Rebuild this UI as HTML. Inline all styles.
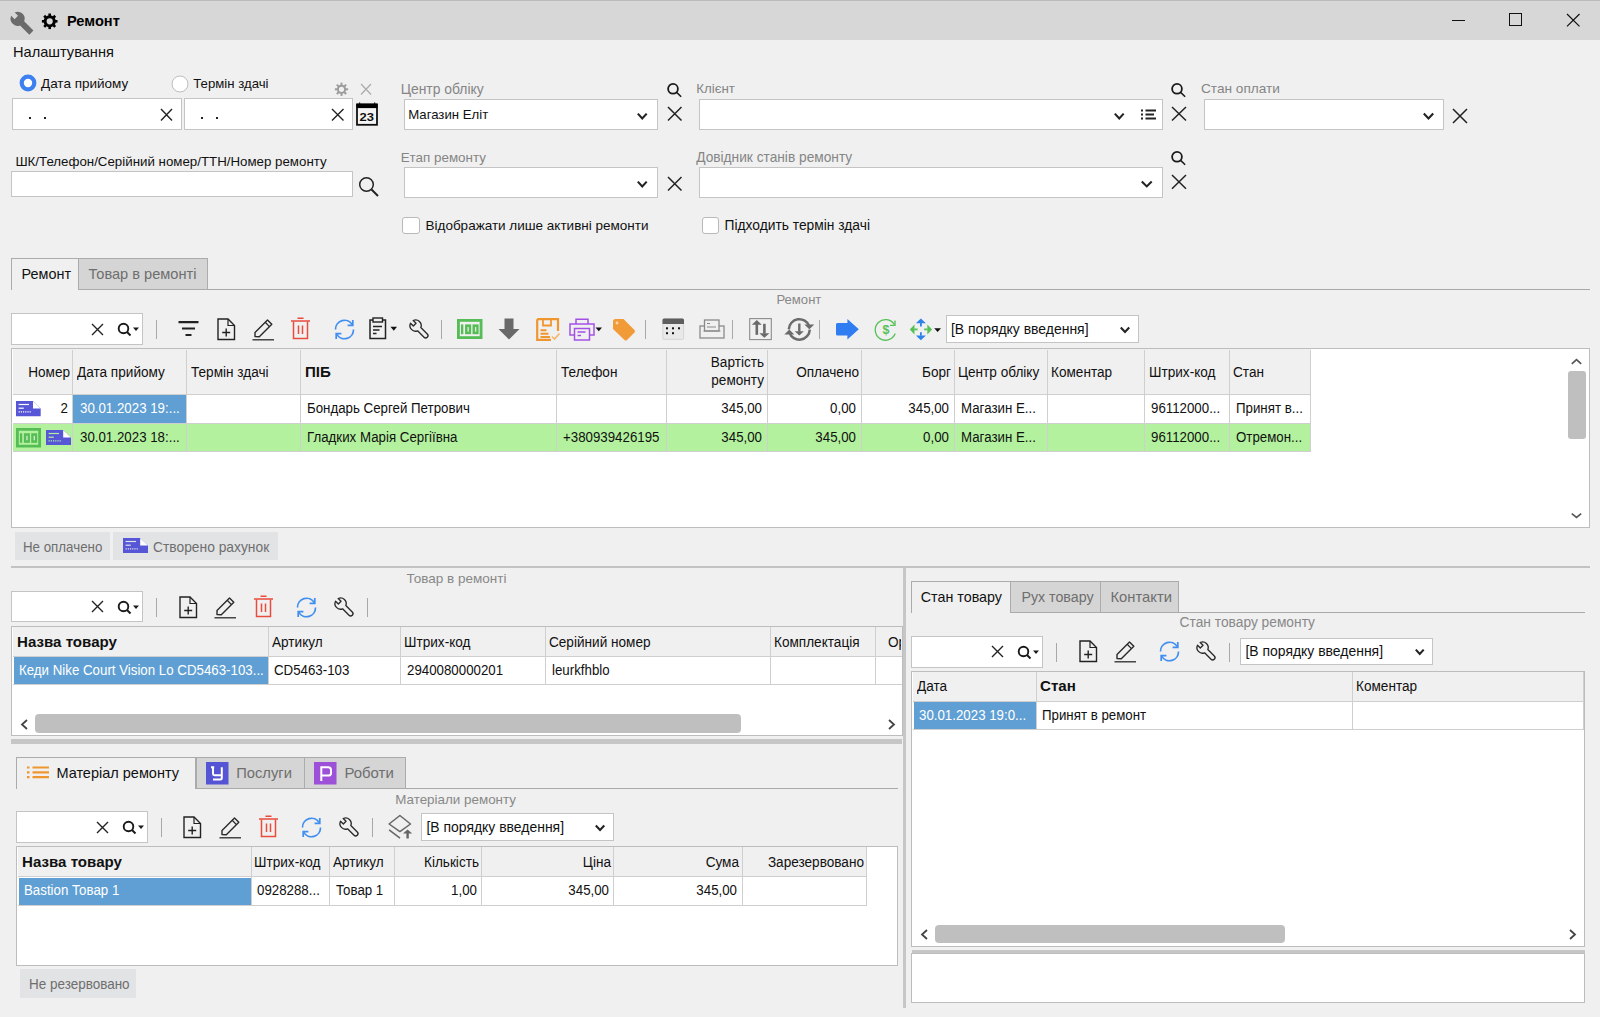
<!DOCTYPE html><html><head><meta charset="utf-8"><style>html,body{margin:0;padding:0;}body{width:1600px;height:1017px;position:relative;overflow:hidden;background:#f0f0f0;font-family:"Liberation Sans", sans-serif;}.t{position:absolute;white-space:nowrap;line-height:20px;}.r{position:absolute;}svg.r{overflow:visible;}</style></head><body>
<div class="r" style="left:0.00px;top:0.00px;width:1600.00px;height:40.00px;background:#d7d7d7;"></div>
<div class="r" style="left:0.00px;top:0.00px;width:1600.00px;height:1.00px;background:#bababa;"></div>
<svg class="r" style="left:10.00px;top:11.00px" width="26" height="26" viewBox="0 0 26 26"><g transform="translate(7.6 7.8) rotate(-45)"><path d="M-2.4 -6.6V-1.8H2.4V-6.6A7 7 0 0 1 2.9 6.4V19.5H-2.9V6.4A7 7 0 0 1 -2.4 -6.6Z" fill="#6b6b6b"/></g></svg>
<svg class="r" style="left:41.00px;top:13.00px" width="18" height="18" viewBox="0 0 18 18"><g transform="translate(8.7 8.3)"><circle r="4.6" fill="none" stroke="#000" stroke-width="3"/><rect x="-1.3" y="-7.8" width="2.6" height="3.6" fill="#000" transform="rotate(0)"/><rect x="-1.3" y="-7.8" width="2.6" height="3.6" fill="#000" transform="rotate(45)"/><rect x="-1.3" y="-7.8" width="2.6" height="3.6" fill="#000" transform="rotate(90)"/><rect x="-1.3" y="-7.8" width="2.6" height="3.6" fill="#000" transform="rotate(135)"/><rect x="-1.3" y="-7.8" width="2.6" height="3.6" fill="#000" transform="rotate(180)"/><rect x="-1.3" y="-7.8" width="2.6" height="3.6" fill="#000" transform="rotate(225)"/><rect x="-1.3" y="-7.8" width="2.6" height="3.6" fill="#000" transform="rotate(270)"/><rect x="-1.3" y="-7.8" width="2.6" height="3.6" fill="#000" transform="rotate(315)"/></g></svg>
<div class="t" style="top:11.24px;font-size:14.6px;color:#000;font-weight:bold;left:67.00px;">Ремонт</div>
<div class="r" style="left:1451.50px;top:20.00px;width:13.00px;height:1.20px;background:#111;"></div>
<div class="r" style="left:1509.00px;top:13.00px;width:13.00px;height:13.00px;border:1px solid #111;box-sizing:border-box;border-width:1.3px;"></div>
<svg class="r" style="left:1565.50px;top:12.80px" width="14.5" height="14.399999999999999" viewBox="0 0 14.5 14.399999999999999"><path d="M1 1L13.5 13.399999999999999M13.5 1L1 13.399999999999999" stroke="#111" stroke-width="1.2" fill="none"/></svg>
<div class="t" style="top:42.44px;font-size:14.6px;color:#111;left:13.00px;">Налаштування</div>
<svg class="r" style="left:18.50px;top:74.30px" width="18" height="18" viewBox="0 0 18 18"><circle cx="9" cy="9" r="6.3" fill="#fff" stroke="#3d80f0" stroke-width="4.2"/></svg>
<div class="t" style="top:74.32px;font-size:13.5px;color:#111;left:41.00px;">Дата прийому</div>
<svg class="r" style="left:170.50px;top:74.50px" width="18" height="18" viewBox="0 0 18 18"><circle cx="9" cy="9" r="8" fill="#fff" stroke="#bdbdbd" stroke-width="1"/></svg>
<div class="t" style="top:74.43px;font-size:13.2px;color:#111;left:193.30px;">Термін здачі</div>
<svg class="r" style="left:334.00px;top:82.00px" width="15" height="15" viewBox="0 0 15 15"><g transform="translate(7.5 7.3)"><circle r="3.6" fill="none" stroke="#9c9c9c" stroke-width="2"/><rect x="-1" y="-6.6" width="2" height="2.8" fill="#9c9c9c" transform="rotate(0)"/><rect x="-1" y="-6.6" width="2" height="2.8" fill="#9c9c9c" transform="rotate(45)"/><rect x="-1" y="-6.6" width="2" height="2.8" fill="#9c9c9c" transform="rotate(90)"/><rect x="-1" y="-6.6" width="2" height="2.8" fill="#9c9c9c" transform="rotate(135)"/><rect x="-1" y="-6.6" width="2" height="2.8" fill="#9c9c9c" transform="rotate(180)"/><rect x="-1" y="-6.6" width="2" height="2.8" fill="#9c9c9c" transform="rotate(225)"/><rect x="-1" y="-6.6" width="2" height="2.8" fill="#9c9c9c" transform="rotate(270)"/><rect x="-1" y="-6.6" width="2" height="2.8" fill="#9c9c9c" transform="rotate(315)"/></g></svg>
<svg class="r" style="left:360.00px;top:83.00px" width="12" height="12.5" viewBox="0 0 12 12.5"><path d="M1 1L11 11.5M11 1L1 11.5" stroke="#aaaaaa" stroke-width="1.2" fill="none"/></svg>
<div class="r" style="left:12.00px;top:98.00px;width:170.00px;height:32.00px;background:#fff;border:1px solid #c4c4c4;box-sizing:border-box;"></div>
<div class="r" style="left:28.50px;top:117.00px;width:2.00px;height:2.00px;background:#222;"></div>
<div class="r" style="left:43.50px;top:117.00px;width:2.00px;height:2.00px;background:#222;"></div>
<svg class="r" style="left:160.00px;top:108.00px" width="13" height="13.5" viewBox="0 0 13 13.5"><path d="M1 1L12 12.5M12 1L1 12.5" stroke="#222" stroke-width="1.4" fill="none"/></svg>
<div class="r" style="left:184.00px;top:98.00px;width:169.00px;height:32.00px;background:#fff;border:1px solid #c4c4c4;box-sizing:border-box;"></div>
<div class="r" style="left:200.50px;top:117.00px;width:2.00px;height:2.00px;background:#222;"></div>
<div class="r" style="left:215.50px;top:117.00px;width:2.00px;height:2.00px;background:#222;"></div>
<svg class="r" style="left:330.50px;top:108.00px" width="13.5" height="13.5" viewBox="0 0 13.5 13.5"><path d="M1 1L12.5 12.5M12.5 1L1 12.5" stroke="#222" stroke-width="1.4" fill="none"/></svg>
<svg class="r" style="left:356.00px;top:101.50px" width="22" height="24" viewBox="0 0 22 24"><rect x="1" y="2.5" width="20" height="20.3" stroke="#111" stroke-width="1.8" fill="#f4f4f4"/><rect x="0.5" y="1.6" width="21" height="4.5" fill="#000"/><path d="M3.6 0.5V2M18.6 0.5V2" stroke="#111" stroke-width="1.2"/><text x="3.6" y="19" textLength="14.5" lengthAdjust="spacingAndGlyphs" font-family="Liberation Sans" font-weight="bold" font-size="11" fill="#111">23</text></svg>
<div class="t" style="top:152.09px;font-size:13.3px;color:#111;left:15.40px;">ШК/Телефон/Серійний номер/ТТН/Номер ремонту</div>
<div class="r" style="left:11.00px;top:171.00px;width:342.00px;height:26.00px;background:#fff;border:1px solid #c4c4c4;box-sizing:border-box;"></div>
<svg class="r" style="left:358.00px;top:176.00px" width="22" height="22" viewBox="0 0 22 22"><circle cx="8.5" cy="8.5" r="6.8" stroke="#222" stroke-width="1.5" fill="none"/><path d="M13.5 13.5L20 20" stroke="#222" stroke-width="2"/></svg>
<div class="t" style="top:78.88px;font-size:13.9px;color:#858585;left:400.70px;">Центр обліку</div>
<div class="r" style="left:404.00px;top:99.00px;width:254.00px;height:31.00px;background:#fff;border:1px solid #c4c4c4;box-sizing:border-box;"></div>
<div class="t" style="top:105.13px;font-size:13.2px;color:#111;left:408.20px;">Магазин Еліт</div>
<svg class="r" style="left:636.00px;top:111.50px" width="12.5" height="8.0" viewBox="0 0 12.5 8.0"><path d="M1.8 1.6L6.25 6.4L10.7 1.6" stroke="#222" stroke-width="2.1" fill="none"/></svg>
<svg class="r" style="left:666.50px;top:82.50px" width="16" height="15" viewBox="0 0 16 15"><circle cx="6" cy="5.8" r="4.9" stroke="#1a1a1a" stroke-width="1.8" fill="none"/><path d="M9.6 9.4L14.2 13.8" stroke="#1a1a1a" stroke-width="1.5"/></svg>
<svg class="r" style="left:666.50px;top:106.00px" width="15.5" height="15.5" viewBox="0 0 15.5 15.5"><path d="M1 1L14.5 14.5M14.5 1L1 14.5" stroke="#222" stroke-width="1.5" fill="none"/></svg>
<div class="t" style="top:79.09px;font-size:13.3px;color:#858585;left:696.20px;">Клієнт</div>
<div class="r" style="left:699.00px;top:99.00px;width:464.00px;height:31.00px;background:#fff;border:1px solid #c4c4c4;box-sizing:border-box;"></div>
<svg class="r" style="left:1113.00px;top:111.50px" width="12.5" height="8.0" viewBox="0 0 12.5 8.0"><path d="M1.8 1.6L6.25 6.4L10.7 1.6" stroke="#222" stroke-width="2.1" fill="none"/></svg>
<svg class="r" style="left:1140.00px;top:109.00px" width="17" height="12" viewBox="0 0 17 12"><path d="M1 1.5h2M1 5.5h2M1 9.5h2" stroke="#222" stroke-width="2"/><path d="M5.5 1.5H16M5.5 5.5H14M5.5 9.5H16" stroke="#222" stroke-width="1.8"/></svg>
<svg class="r" style="left:1171.00px;top:82.50px" width="16" height="15" viewBox="0 0 16 15"><circle cx="6" cy="5.8" r="4.9" stroke="#1a1a1a" stroke-width="1.8" fill="none"/><path d="M9.6 9.4L14.2 13.8" stroke="#1a1a1a" stroke-width="1.5"/></svg>
<svg class="r" style="left:1171.00px;top:106.00px" width="16" height="15.5" viewBox="0 0 16 15.5"><path d="M1 1L15 14.5M15 1L1 14.5" stroke="#222" stroke-width="1.5" fill="none"/></svg>
<div class="t" style="top:79.02px;font-size:13.65px;color:#858585;left:1201.00px;">Стан оплати</div>
<div class="r" style="left:1204.00px;top:99.00px;width:240.00px;height:31.00px;background:#fff;border:1px solid #c4c4c4;box-sizing:border-box;"></div>
<svg class="r" style="left:1421.50px;top:111.50px" width="13.0" height="8.0" viewBox="0 0 13.0 8.0"><path d="M1.8 1.6L6.5 6.4L11.2 1.6" stroke="#222" stroke-width="2.1" fill="none"/></svg>
<svg class="r" style="left:1452.00px;top:107.50px" width="16" height="16.0" viewBox="0 0 16 16.0"><path d="M1 1L15 15.0M15 1L1 15.0" stroke="#222" stroke-width="1.5" fill="none"/></svg>
<div class="t" style="top:147.66px;font-size:13.4px;color:#858585;left:400.70px;">Етап ремонту</div>
<div class="r" style="left:404.00px;top:167.00px;width:254.00px;height:31.00px;background:#fff;border:1px solid #c4c4c4;box-sizing:border-box;"></div>
<svg class="r" style="left:636.00px;top:179.50px" width="12.5" height="8.0" viewBox="0 0 12.5 8.0"><path d="M1.8 1.6L6.25 6.4L10.7 1.6" stroke="#222" stroke-width="2.1" fill="none"/></svg>
<svg class="r" style="left:666.50px;top:175.50px" width="15.5" height="15.5" viewBox="0 0 15.5 15.5"><path d="M1 1L14.5 14.5M14.5 1L1 14.5" stroke="#222" stroke-width="1.5" fill="none"/></svg>
<div class="t" style="top:147.55px;font-size:13.72px;color:#858585;left:696.20px;">Довідник станів ремонту</div>
<div class="r" style="left:699.00px;top:167.00px;width:464.00px;height:31.00px;background:#fff;border:1px solid #c4c4c4;box-sizing:border-box;"></div>
<svg class="r" style="left:1140.00px;top:179.50px" width="13.5" height="8.0" viewBox="0 0 13.5 8.0"><path d="M1.8 1.6L6.75 6.4L11.7 1.6" stroke="#222" stroke-width="2.1" fill="none"/></svg>
<svg class="r" style="left:1171.00px;top:151.00px" width="16" height="15" viewBox="0 0 16 15"><circle cx="6" cy="5.8" r="4.9" stroke="#1a1a1a" stroke-width="1.8" fill="none"/><path d="M9.6 9.4L14.2 13.8" stroke="#1a1a1a" stroke-width="1.5"/></svg>
<svg class="r" style="left:1171.00px;top:174.00px" width="16" height="15.75" viewBox="0 0 16 15.75"><path d="M1 1L15 14.75M15 1L1 14.75" stroke="#222" stroke-width="1.5" fill="none"/></svg>
<div class="r" style="left:402.00px;top:217.00px;width:18.00px;height:17.00px;background:#fff;border:1px solid #b9b9b9;box-sizing:border-box;border-radius:3px;"></div>
<div class="t" style="top:216.32px;font-size:13.5px;color:#111;left:425.50px;">Відображати лише активні ремонти</div>
<div class="r" style="left:702.00px;top:217.00px;width:17.00px;height:17.00px;background:#fff;border:1px solid #b9b9b9;box-sizing:border-box;border-radius:3px;"></div>
<div class="t" style="top:216.22px;font-size:13.8px;color:#111;left:724.50px;">Підходить термін здачі</div>
<div class="r" style="left:11.00px;top:258.00px;width:68.00px;height:32.00px;background:#f0f0f0;border:1px solid #ababab;border-bottom:none;box-sizing:border-box;"></div>
<div class="t" style="top:264.01px;font-size:14.4px;color:#111;left:21.60px;">Ремонт</div>
<div class="r" style="left:78.00px;top:258.00px;width:130.00px;height:32.00px;background:#d5d5d5;border:1px solid #ababab;box-sizing:border-box;"></div>
<div class="t" style="top:263.94px;font-size:14.6px;color:#6e6e6e;left:88.50px;">Товар в ремонті</div>
<div class="r" style="left:207.50px;top:288.80px;width:1382.50px;height:1.10px;background:#a9a9a9;"></div>
<div class="t" style="top:290.31px;font-size:13.1px;color:#888;left:598.90px;width:400px;text-align:center;">Ремонт</div>
<div class="r" style="left:11.00px;top:313.00px;width:132.00px;height:32.00px;background:#fff;border:1px solid #c4c4c4;box-sizing:border-box;"></div>
<svg class="r" style="left:91.10px;top:322.62px" width="13.0" height="13.0" viewBox="0 0 13.0 13.0"><path d="M1 1L12.0 12.0M12.0 1L1 12.0" stroke="#222" stroke-width="1.4" fill="none"/></svg>
<svg class="r" style="left:117.10px;top:322.12px" width="23" height="16" viewBox="0 0 23 16"><circle cx="6.5" cy="6.5" r="4.8" stroke="#1a1a1a" stroke-width="1.9" fill="none"/><path d="M10 10L13.5 13.5" stroke="#1a1a1a" stroke-width="2"/><path d="M16 5.5h6l-3 3.5z" fill="#1a1a1a"/></svg>
<div class="r" style="left:156.00px;top:320.00px;width:1.20px;height:18.50px;background:#a8a8a8;"></div>
<svg class="r" style="left:177.50px;top:321.00px" width="21" height="16" viewBox="0 0 21 16"><path d="M0.5 1.2H20.5M4 7.5H17M7.5 14H13.5" stroke="#222" stroke-width="2.2"/></svg>
<svg class="r" style="left:216.50px;top:317.50px" width="19" height="23" viewBox="0 0 19 23"><path d="M1 1H11L17.5 7.5V21.5H1Z" stroke="#222" stroke-width="1.4" fill="none" stroke-linejoin="miter"/><path d="M11 1V7.5H17.5" stroke="#222" stroke-width="1.2" fill="none"/><path d="M9.2 10.5V18.5M5.2 14.5H13.2" stroke="#222" stroke-width="1.4"/></svg>
<svg class="r" style="left:251.50px;top:317.50px" width="23" height="23" viewBox="0 0 23 23"><path d="M3 18.5V14.5L15.5 2L19.8 6.3L7.3 18.8Z" stroke="#2a2a2a" stroke-width="1.4" fill="none" stroke-linejoin="round"/><path d="M13.2 4.3L17.5 8.6" stroke="#2a2a2a" stroke-width="1.3"/><path d="M0.5 21.8H22" stroke="#2a2a2a" stroke-width="1.3"/></svg>
<svg class="r" style="left:289.50px;top:317.20px" width="21" height="23" viewBox="0 0 21 23"><path d="M1 4H20M7.5 1.2H13.5" stroke="#e94b3c" stroke-width="1.5"/><path d="M3.5 4.5V21.5H17.5V4.5" stroke="#e94b3c" stroke-width="1.5" fill="none"/><path d="M8.5 8.5V17M12.5 8.5V17" stroke="#e94b3c" stroke-width="1.5"/></svg>
<svg class="r" style="left:333.50px;top:318.50px" width="21" height="21" viewBox="0 0 21 21"><path d="M1.5 10.5A9 9 0 0 1 18.2 5.6" stroke="#3f8ef0" stroke-width="1.7" fill="none"/><path d="M19.5 10.5A9 9 0 0 1 2.8 15.4" stroke="#3f8ef0" stroke-width="1.7" fill="none"/><path d="M18.8 1V6.3H13.6" stroke="#3f8ef0" stroke-width="1.7" fill="none"/><path d="M2.2 20V14.7H7.4" stroke="#3f8ef0" stroke-width="1.7" fill="none"/></svg>
<svg class="r" style="left:368.00px;top:317.00px" width="30" height="23" viewBox="0 0 30 23"><path d="M5 3H2V21.5H17.5V3H14.5" stroke="#222" stroke-width="1.5" fill="none"/><rect x="5" y="1" width="9.5" height="4" stroke="#222" stroke-width="1.4" fill="none"/><path d="M5 9.5H14M5 13H11.5M5 16.5H8.5" stroke="#222" stroke-width="1.4"/><path d="M22.5 9.8h6.5l-3.2 4z" fill="#111"/></svg>
<svg class="r" style="left:408.50px;top:318.50px" width="21" height="21" viewBox="0 0 21 21"><g transform="translate(6.6 6.6) rotate(-45)"><path d="M-1.9 -5.3V-1.3H1.9V-5.3A5.6 5.6 0 0 1 2.3 5.1V14.2A2.3 2.3 0 0 1 -2.3 14.2V5.1A5.6 5.6 0 0 1 -1.9 -5.3Z" stroke="#2a2a2a" stroke-width="1.35" fill="none" stroke-linejoin="round"/></g></svg>
<div class="r" style="left:441.20px;top:320.00px;width:1.20px;height:18.50px;background:#a8a8a8;"></div>
<svg class="r" style="left:457.00px;top:319.00px" width="25.5" height="20" viewBox="0 0 25.5 20"><g transform="scale(1.020 1.000)"><rect x="1.4" y="1.4" width="22.2" height="17.2" stroke="#56bd56" stroke-width="2.8" fill="none"/><rect x="3.9" y="5.4" width="2.3" height="9.8" fill="#56bd56"/><rect x="7.9" y="5.4" width="6" height="9.8" fill="#56bd56"/><rect x="10.3" y="8" width="1.3" height="4.6" fill="#d8f0d8"/><rect x="15.2" y="5.4" width="6" height="9.8" fill="#56bd56"/><rect x="17.6" y="8" width="1.3" height="4.6" fill="#d8f0d8"/></g></svg>
<svg class="r" style="left:497.50px;top:318.00px" width="22" height="22" viewBox="0 0 22 22"><path d="M6.5 0.5H15.5V11H21.5L11 21.5L0.5 11H6.5Z" fill="#696969"/></svg>
<svg class="r" style="left:536.00px;top:318.00px" width="25" height="23" viewBox="0 0 25 23"><path d="M1.2 1.2H22V13M15 21.8H1.2V1.2" stroke="#f0962f" stroke-width="2.2" fill="none"/><path d="M7 1.5V7.5H15V1.5" stroke="#f0962f" stroke-width="1.8" fill="none"/><path d="M4.5 12.2H10.5M4.5 15.8H12.5M4.5 19H14" stroke="#f0962f" stroke-width="1.9"/><path d="M16 18.5L18.5 21L23.5 15.5" stroke="#f6b56a" stroke-width="1.6" fill="none"/></svg>
<svg class="r" style="left:569.00px;top:318.00px" width="34" height="23" viewBox="0 0 34 23"><path d="M7 6V1.2H19V6" stroke="#a450e6" stroke-width="1.5" fill="none"/><path d="M5.5 17H1V6H25V17H20.5" stroke="#a450e6" stroke-width="1.5" fill="none"/><rect x="5.5" y="10.5" width="15" height="11.5" stroke="#a450e6" stroke-width="1.5" fill="#f0f0f0"/><path d="M8.5 14H16.5M8.5 17.5H12" stroke="#a450e6" stroke-width="1.4"/><path d="M26.5 9.5h6.5l-3.2 3.8z" fill="#111"/></svg>
<svg class="r" style="left:612.00px;top:317.50px" width="24" height="23" viewBox="0 0 24 23"><path d="M1 3.5Q1 1 3.5 1H11.5L22.5 12Q23.5 13.2 22.5 14.5L15 22Q13.8 23 12.5 22L1 11Z" fill="#f19b38"/><circle cx="5" cy="5" r="1.4" fill="#fbd9ae"/></svg>
<div class="r" style="left:644.50px;top:320.00px;width:1.20px;height:18.50px;background:#a8a8a8;"></div>
<svg class="r" style="left:662.00px;top:318.00px" width="22" height="22" viewBox="0 0 22 22"><rect x="0.8" y="0.8" width="20.8" height="20.6" rx="1.2" fill="#e9e9e9" stroke="#cfcfcf" stroke-width="0.8"/><path d="M0.5 2A1.5 1.5 0 0 1 2 0.5H20.5A1.5 1.5 0 0 1 22 2V6H0.5Z" fill="#5e5e5e"/><rect x="4" y="9.3" width="2" height="2" fill="#111"/><rect x="10" y="9.3" width="2" height="2" fill="#111"/><rect x="16" y="9.3" width="2" height="2" fill="#111"/><rect x="4" y="14.2" width="2" height="2" fill="#111"/><rect x="10" y="14.2" width="2" height="2" fill="#111"/></svg>
<svg class="r" style="left:698.50px;top:319.00px" width="26" height="20" viewBox="0 0 26 20"><rect x="1" y="7" width="24" height="12" stroke="#8a8a8a" stroke-width="1.3" fill="none"/><rect x="5.5" y="1" width="14.5" height="11" stroke="#8a8a8a" stroke-width="1.3" fill="#f0f0f0"/><path d="M8 4.5H11M8 8H17M4.5 12H21.5" stroke="#8a8a8a" stroke-width="1.2"/></svg>
<div class="r" style="left:731.60px;top:320.00px;width:1.20px;height:18.50px;background:#a8a8a8;"></div>
<svg class="r" style="left:748.50px;top:318.00px" width="23" height="22" viewBox="0 0 23 22"><rect x="0.7" y="0.6" width="21.6" height="21" stroke="#8c8c8c" stroke-width="1.1" fill="none"/><path d="M7.8 6V16.8" stroke="#6a6a6a" stroke-width="2.6"/><path d="M2.8 6.7L7.8 2.1L12.8 6.7Z" fill="#6a6a6a"/><path d="M15.4 5.8V15.6" stroke="#6a6a6a" stroke-width="2.6"/><path d="M10.4 15.2L15.4 19.8L20.4 15.2Z" fill="#6a6a6a"/></svg>
<svg class="r" style="left:783.50px;top:316.50px" width="31" height="25" viewBox="0 0 31 25"><path d="M4.8 12.4A10.5 10.5 0 0 1 25.2 9.2" stroke="#6b6b6b" stroke-width="2.5" fill="none"/><path d="M25.8 12.6A10.5 10.5 0 0 1 5.4 15.6" stroke="#6b6b6b" stroke-width="2.5" fill="none"/><path d="M20.3 7.6H30.3L25.3 12.3Z" fill="#6b6b6b"/><path d="M0.3 17.6H10.3L5.3 12.4Z" fill="#6b6b6b"/><path d="M15.3 6.5V14.8" stroke="#6b6b6b" stroke-width="2.4"/><path d="M10.7 14.3H19.9L15.3 18.6Z" fill="#6b6b6b"/></svg>
<div class="r" style="left:819.00px;top:320.00px;width:1.20px;height:18.50px;background:#a8a8a8;"></div>
<svg class="r" style="left:836.00px;top:319.00px" width="23" height="21" viewBox="0 0 23 21"><path d="M1.5 4H11.4V0L22.8 10.3L11.4 20.5V16.6H1.5Q0 16.6 0 15V5.5Q0 4 1.5 4Z" fill="#2f7df0"/></svg>
<svg class="r" style="left:874.00px;top:318.50px" width="24" height="22" viewBox="0 0 24 22"><path d="M21.2 14.5A10.3 10.3 0 1 1 20.3 5.5" stroke="#56c156" stroke-width="1.35" fill="none"/><path d="M21 1.5V6.3H16" stroke="#56c156" stroke-width="1.35" fill="none"/><text x="12" y="14.6" text-anchor="middle" font-family="Liberation Sans" font-weight="bold" font-size="12.5" fill="#56c156">$</text></svg>
<svg class="r" style="left:909.00px;top:317.50px" width="33" height="23" viewBox="0 0 33 23"><path d="M6.9 5.3L11.9 0.6L16.9 5.3Z" fill="#2f80ea"/><path d="M11.9 5V8.6" stroke="#2f80ea" stroke-width="1.8"/><path d="M6.9 17.5L11.9 22.2L16.9 17.5Z" fill="#2f80ea"/><path d="M11.9 14.3V17.8" stroke="#2f80ea" stroke-width="1.8"/><path d="M5.5 6.4L0.8 11.4L5.5 16.4Z" fill="#56c156"/><path d="M5.2 11.4H8.6" stroke="#56c156" stroke-width="1.8"/><path d="M18.3 6.4L23.1 11.4L18.3 16.4Z" fill="#56c156"/><path d="M15.2 11.4H18.6" stroke="#56c156" stroke-width="1.8"/><path d="M25.2 10.3h6.8l-3.4 3.6z" fill="#111"/></svg>
<div class="r" style="left:946.00px;top:315.00px;width:193.00px;height:28.00px;background:#fff;border:1px solid #c4c4c4;box-sizing:border-box;"></div>
<div class="t" style="top:319.17px;font-size:13.95px;color:#111;left:951.00px;">[В порядку введення]</div>
<svg class="r" style="left:1119.00px;top:325.50px" width="12" height="7.5" viewBox="0 0 12 7.5"><path d="M1.8 1.6L6.0 5.9L10.2 1.6" stroke="#222" stroke-width="2.1" fill="none"/></svg>
<div class="r" style="left:11.00px;top:348.00px;width:1579.00px;height:180.00px;background:#fff;border:1px solid #bdbdbd;box-sizing:border-box;"></div>
<div class="r" style="left:12.50px;top:349.30px;width:1298.00px;height:45.00px;background:#f0f0f0;"></div>
<div class="r" style="left:186.40px;top:394.30px;width:114.20px;height:28.70px;background:#fff;"></div>
<div class="r" style="left:72.60px;top:394.30px;width:113.80px;height:28.70px;background:#5f9fd3;"></div>
<div class="r" style="left:12.50px;top:423.00px;width:1298.00px;height:28.50px;background:#b3f19e;"></div>
<div class="r" style="left:12.50px;top:394.00px;width:1298.00px;height:1.20px;background:#cfcfcf;"></div>
<div class="r" style="left:12.50px;top:422.60px;width:1298.00px;height:1.00px;background:#cfcfcf;"></div>
<div class="r" style="left:12.50px;top:451.00px;width:1298.00px;height:1.20px;background:#cfcfcf;"></div>
<div class="r" style="left:72.10px;top:350.30px;width:1.20px;height:101.70px;background:#cfcfcf;"></div>
<div class="r" style="left:185.90px;top:350.30px;width:1.20px;height:101.70px;background:#cfcfcf;"></div>
<div class="r" style="left:300.10px;top:350.30px;width:1.20px;height:101.70px;background:#cfcfcf;"></div>
<div class="r" style="left:555.80px;top:350.30px;width:1.20px;height:101.70px;background:#cfcfcf;"></div>
<div class="r" style="left:665.50px;top:350.30px;width:1.20px;height:101.70px;background:#cfcfcf;"></div>
<div class="r" style="left:766.50px;top:350.30px;width:1.20px;height:101.70px;background:#cfcfcf;"></div>
<div class="r" style="left:861.00px;top:350.30px;width:1.20px;height:101.70px;background:#cfcfcf;"></div>
<div class="r" style="left:953.50px;top:350.30px;width:1.20px;height:101.70px;background:#cfcfcf;"></div>
<div class="r" style="left:1046.90px;top:350.30px;width:1.20px;height:101.70px;background:#cfcfcf;"></div>
<div class="r" style="left:1143.80px;top:350.30px;width:1.20px;height:101.70px;background:#cfcfcf;"></div>
<div class="r" style="left:1228.80px;top:350.30px;width:1.20px;height:101.70px;background:#cfcfcf;"></div>
<div class="r" style="left:1310.00px;top:350.30px;width:1.20px;height:101.70px;background:#cfcfcf;"></div>
<div class="t" style="top:362.26px;font-size:15.4px;color:#111;left:-330.00px;width:400px;text-align:right;transform:scaleX(0.8831);transform-origin:right center;">Номер</div>
<div class="t" style="top:362.26px;font-size:15.4px;color:#111;left:77.20px;transform:scaleX(0.8831);transform-origin:left center;">Дата прийому</div>
<div class="t" style="top:362.26px;font-size:15.4px;color:#111;left:190.60px;transform:scaleX(0.8831);transform-origin:left center;">Термін здачі</div>
<div class="t" style="top:362.26px;font-size:15.4px;color:#111;font-weight:bold;left:305.00px;transform:scaleX(0.9805);transform-origin:left center;">ПІБ</div>
<div class="t" style="top:362.26px;font-size:15.4px;color:#111;left:560.50px;transform:scaleX(0.8831);transform-origin:left center;">Телефон</div>
<div class="t" style="top:352.46px;font-size:15.4px;color:#111;left:364.40px;width:400px;text-align:right;transform:scaleX(0.8831);transform-origin:right center;">Вартість</div>
<div class="t" style="top:370.16px;font-size:15.4px;color:#111;left:364.40px;width:400px;text-align:right;transform:scaleX(0.8831);transform-origin:right center;">ремонту</div>
<div class="t" style="top:362.26px;font-size:15.4px;color:#111;left:459.00px;width:400px;text-align:right;transform:scaleX(0.8831);transform-origin:right center;">Оплачено</div>
<div class="t" style="top:362.26px;font-size:15.4px;color:#111;left:550.80px;width:400px;text-align:right;transform:scaleX(0.8831);transform-origin:right center;">Борг</div>
<div class="t" style="top:362.26px;font-size:15.4px;color:#111;left:957.80px;transform:scaleX(0.8831);transform-origin:left center;">Центр обліку</div>
<div class="t" style="top:362.26px;font-size:15.4px;color:#111;left:1051.00px;transform:scaleX(0.8831);transform-origin:left center;">Коментар</div>
<div class="t" style="top:362.26px;font-size:15.4px;color:#111;left:1148.50px;transform:scaleX(0.8831);transform-origin:left center;">Штрих-код</div>
<div class="t" style="top:362.26px;font-size:15.4px;color:#111;left:1233.00px;transform:scaleX(0.8831);transform-origin:left center;">Стан</div>
<svg class="r" style="left:16.20px;top:401.00px" width="24.7" height="15.2" viewBox="0 0 24.7 15.2"><path d="M0 0H17.0L24.7 7.6V15.2H0Z" fill="#5656d6"/><path d="M17.0 0L24.7 7.6H17.0Z" fill="#fff"/><path d="M2.6 3.5H13" stroke="#fff" stroke-width="1.2"/><path d="M2.6 7.2H7.8" stroke="#fff" stroke-width="1.2"/><path d="M2.6 10.9H15" stroke="#fff" stroke-width="1.2" stroke-dasharray="1.2 1"/></svg>
<div class="t" style="top:398.26px;font-size:15.4px;color:#111;left:-332.40px;width:400px;text-align:right;transform:scaleX(0.8636);transform-origin:right center;">2</div>
<div class="t" style="top:398.26px;font-size:15.4px;color:#fff;left:79.60px;transform:scaleX(0.8636);transform-origin:left center;">30.01.2023 19:...</div>
<div class="t" style="top:398.26px;font-size:15.4px;color:#111;left:307.30px;transform:scaleX(0.8636);transform-origin:left center;">Бондарь Сергей Петрович</div>
<div class="t" style="top:398.26px;font-size:15.4px;color:#111;left:361.80px;width:400px;text-align:right;transform:scaleX(0.8636);transform-origin:right center;">345,00</div>
<div class="t" style="top:398.26px;font-size:15.4px;color:#111;left:456.30px;width:400px;text-align:right;transform:scaleX(0.8636);transform-origin:right center;">0,00</div>
<div class="t" style="top:398.26px;font-size:15.4px;color:#111;left:548.70px;width:400px;text-align:right;transform:scaleX(0.8636);transform-origin:right center;">345,00</div>
<div class="t" style="top:398.26px;font-size:15.4px;color:#111;left:960.70px;transform:scaleX(0.8636);transform-origin:left center;">Магазин Е...</div>
<div class="t" style="top:398.26px;font-size:15.4px;color:#111;left:1150.70px;transform:scaleX(0.8636);transform-origin:left center;">96112000...</div>
<div class="t" style="top:398.26px;font-size:15.4px;color:#111;left:1235.70px;transform:scaleX(0.8636);transform-origin:left center;">Принят в...</div>
<svg class="r" style="left:16.00px;top:427.50px" width="25" height="19.5" viewBox="0 0 25 19.5"><g transform="scale(1.000 0.975)"><rect x="1.4" y="1.4" width="22.2" height="17.2" stroke="#56bd56" stroke-width="2.8" fill="none"/><rect x="3.9" y="5.4" width="2.3" height="9.8" fill="#56bd56"/><rect x="7.9" y="5.4" width="6" height="9.8" fill="#56bd56"/><rect x="10.3" y="8" width="1.3" height="4.6" fill="#d8f0d8"/><rect x="15.2" y="5.4" width="6" height="9.8" fill="#56bd56"/><rect x="17.6" y="8" width="1.3" height="4.6" fill="#d8f0d8"/></g></svg>
<svg class="r" style="left:46.00px;top:430.00px" width="25" height="15" viewBox="0 0 25 15"><path d="M0 0H17.2L25 7.5V15H0Z" fill="#5656d6"/><path d="M17.2 0L25 7.5H17.2Z" fill="#fff"/><path d="M2.6 3.5H13" stroke="#b3f19e" stroke-width="1.2"/><path d="M2.6 7.2H7.8" stroke="#b3f19e" stroke-width="1.2"/><path d="M2.6 10.9H15" stroke="#b3f19e" stroke-width="1.2" stroke-dasharray="1.2 1"/></svg>
<div class="t" style="top:426.66px;font-size:15.4px;color:#111;left:79.60px;transform:scaleX(0.8636);transform-origin:left center;">30.01.2023 18:...</div>
<div class="t" style="top:426.66px;font-size:15.4px;color:#111;left:307.30px;transform:scaleX(0.8636);transform-origin:left center;">Гладких Марія Сергіївна</div>
<div class="t" style="top:426.66px;font-size:15.4px;color:#111;left:563.00px;transform:scaleX(0.8636);transform-origin:left center;">+380939426195</div>
<div class="t" style="top:426.66px;font-size:15.4px;color:#111;left:361.80px;width:400px;text-align:right;transform:scaleX(0.8636);transform-origin:right center;">345,00</div>
<div class="t" style="top:426.66px;font-size:15.4px;color:#111;left:456.30px;width:400px;text-align:right;transform:scaleX(0.8636);transform-origin:right center;">345,00</div>
<div class="t" style="top:426.66px;font-size:15.4px;color:#111;left:548.70px;width:400px;text-align:right;transform:scaleX(0.8636);transform-origin:right center;">0,00</div>
<div class="t" style="top:426.66px;font-size:15.4px;color:#111;left:960.70px;transform:scaleX(0.8636);transform-origin:left center;">Магазин Е...</div>
<div class="t" style="top:426.66px;font-size:15.4px;color:#111;left:1150.70px;transform:scaleX(0.8636);transform-origin:left center;">96112000...</div>
<div class="t" style="top:426.66px;font-size:15.4px;color:#111;left:1235.70px;transform:scaleX(0.8636);transform-origin:left center;">Отремон...</div>
<svg class="r flip" style="left:1569.50px;top:357.50px" width="13.0" height="7.5" viewBox="0 0 13.0 7.5"><path d="M1.8 1.6L6.5 5.9L11.2 1.6" stroke="#555" stroke-width="1.6" fill="none"/></svg>
<style>.flip{transform:scaleY(-1);}</style>
<div class="r" style="left:1568.00px;top:371.00px;width:18.00px;height:68.00px;background:#bfbfbf;border-radius:3px;"></div>
<svg class="r" style="left:1569.50px;top:511.50px" width="13.0" height="7.0" viewBox="0 0 13.0 7.0"><path d="M1.8 1.6L6.5 5.4L11.2 1.6" stroke="#555" stroke-width="1.6" fill="none"/></svg>
<div class="r" style="left:14.60px;top:531.60px;width:95.10px;height:28.70px;background:#e2e3e5;"></div>
<div class="t" style="top:536.70px;font-size:15.0px;color:#6e6e6e;left:22.90px;transform:scaleX(0.8873);transform-origin:left center;">Не оплачено</div>
<div class="r" style="left:112.50px;top:531.60px;width:165.00px;height:28.70px;background:#e2e3e5;"></div>
<svg class="r" style="left:123.20px;top:538.20px" width="25" height="15" viewBox="0 0 25 15"><path d="M0 0H17.2L25 7.5V15H0Z" fill="#5656d6"/><path d="M17.2 0L25 7.5H17.2Z" fill="#fff"/><path d="M2.6 3.5H13" stroke="#e2e3e5" stroke-width="1.2"/><path d="M2.6 7.2H7.8" stroke="#e2e3e5" stroke-width="1.2"/><path d="M2.6 10.9H15" stroke="#e2e3e5" stroke-width="1.2" stroke-dasharray="1.2 1"/></svg>
<div class="t" style="top:536.70px;font-size:15.0px;color:#6e6e6e;left:152.80px;transform:scaleX(0.9207);transform-origin:left center;">Створено рахунок</div>
<div class="r" style="left:11.20px;top:566.00px;width:1578.80px;height:2.00px;background:#c2c2c2;"></div>
<div class="t" style="top:568.52px;font-size:13.5px;color:#888;left:406.60px;">Товар в ремонті</div>
<div class="r" style="left:11.00px;top:591.00px;width:132.00px;height:31.00px;background:#fff;border:1px solid #c4c4c4;box-sizing:border-box;"></div>
<svg class="r" style="left:91.10px;top:600.15px" width="13.0" height="13.0" viewBox="0 0 13.0 13.0"><path d="M1 1L12.0 12.0M12.0 1L1 12.0" stroke="#222" stroke-width="1.4" fill="none"/></svg>
<svg class="r" style="left:117.10px;top:599.65px" width="23" height="16" viewBox="0 0 23 16"><circle cx="6.5" cy="6.5" r="4.8" stroke="#1a1a1a" stroke-width="1.9" fill="none"/><path d="M10 10L13.5 13.5" stroke="#1a1a1a" stroke-width="2"/><path d="M16 5.5h6l-3 3.5z" fill="#1a1a1a"/></svg>
<div class="r" style="left:156.20px;top:598.00px;width:1.20px;height:18.50px;background:#a8a8a8;"></div>
<svg class="r" style="left:179.00px;top:595.50px" width="19" height="23" viewBox="0 0 19 23"><path d="M1 1H11L17.5 7.5V21.5H1Z" stroke="#222" stroke-width="1.4" fill="none" stroke-linejoin="miter"/><path d="M11 1V7.5H17.5" stroke="#222" stroke-width="1.2" fill="none"/><path d="M9.2 10.5V18.5M5.2 14.5H13.2" stroke="#222" stroke-width="1.4"/></svg>
<svg class="r" style="left:214.00px;top:595.50px" width="23" height="23" viewBox="0 0 23 23"><path d="M3 18.5V14.5L15.5 2L19.8 6.3L7.3 18.8Z" stroke="#2a2a2a" stroke-width="1.4" fill="none" stroke-linejoin="round"/><path d="M13.2 4.3L17.5 8.6" stroke="#2a2a2a" stroke-width="1.3"/><path d="M0.5 21.8H22" stroke="#2a2a2a" stroke-width="1.3"/></svg>
<svg class="r" style="left:252.50px;top:595.30px" width="21" height="23" viewBox="0 0 21 23"><path d="M1 4H20M7.5 1.2H13.5" stroke="#e94b3c" stroke-width="1.5"/><path d="M3.5 4.5V21.5H17.5V4.5" stroke="#e94b3c" stroke-width="1.5" fill="none"/><path d="M8.5 8.5V17M12.5 8.5V17" stroke="#e94b3c" stroke-width="1.5"/></svg>
<svg class="r" style="left:296.00px;top:596.50px" width="21" height="21" viewBox="0 0 21 21"><path d="M1.5 10.5A9 9 0 0 1 18.2 5.6" stroke="#3f8ef0" stroke-width="1.7" fill="none"/><path d="M19.5 10.5A9 9 0 0 1 2.8 15.4" stroke="#3f8ef0" stroke-width="1.7" fill="none"/><path d="M18.8 1V6.3H13.6" stroke="#3f8ef0" stroke-width="1.7" fill="none"/><path d="M2.2 20V14.7H7.4" stroke="#3f8ef0" stroke-width="1.7" fill="none"/></svg>
<svg class="r" style="left:333.50px;top:596.50px" width="21" height="21" viewBox="0 0 21 21"><g transform="translate(6.6 6.6) rotate(-45)"><path d="M-1.9 -5.3V-1.3H1.9V-5.3A5.6 5.6 0 0 1 2.3 5.1V14.2A2.3 2.3 0 0 1 -2.3 14.2V5.1A5.6 5.6 0 0 1 -1.9 -5.3Z" stroke="#2a2a2a" stroke-width="1.35" fill="none" stroke-linejoin="round"/></g></svg>
<div class="r" style="left:366.60px;top:598.00px;width:1.20px;height:18.50px;background:#a8a8a8;"></div>
<div class="r" style="left:11.00px;top:626.00px;width:892.00px;height:110.00px;background:#fff;border:1px solid #bdbdbd;box-sizing:border-box;"></div>
<div class="r" style="left:12.50px;top:627.30px;width:889.00px;height:29.00px;background:#f0f0f0;"></div>
<div class="r" style="left:12.50px;top:655.80px;width:889.00px;height:1.20px;background:#cfcfcf;"></div>
<div class="r" style="left:12.50px;top:683.60px;width:889.00px;height:1.20px;background:#cfcfcf;"></div>
<div class="r" style="left:268.10px;top:627.30px;width:1.20px;height:57.20px;background:#cfcfcf;"></div>
<div class="r" style="left:399.80px;top:627.30px;width:1.20px;height:57.20px;background:#cfcfcf;"></div>
<div class="r" style="left:544.90px;top:627.30px;width:1.20px;height:57.20px;background:#cfcfcf;"></div>
<div class="r" style="left:770.00px;top:627.30px;width:1.20px;height:57.20px;background:#cfcfcf;"></div>
<div class="r" style="left:874.80px;top:627.30px;width:1.20px;height:57.20px;background:#cfcfcf;"></div>
<div class="r" style="left:14.00px;top:657.00px;width:254.10px;height:26.60px;background:#5f9fd3;"></div>
<div class="t" style="top:631.86px;font-size:15.4px;color:#111;font-weight:bold;left:16.90px;transform:scaleX(0.9805);transform-origin:left center;">Назва товару</div>
<div class="t" style="top:631.86px;font-size:15.4px;color:#111;left:271.60px;transform:scaleX(0.8831);transform-origin:left center;">Артикул</div>
<div class="t" style="top:631.86px;font-size:15.4px;color:#111;left:404.30px;transform:scaleX(0.8831);transform-origin:left center;">Штрих-код</div>
<div class="t" style="top:631.86px;font-size:15.4px;color:#111;left:548.60px;transform:scaleX(0.8831);transform-origin:left center;">Серійний номер</div>
<div class="t" style="top:631.86px;font-size:15.4px;color:#111;left:774.40px;transform:scaleX(0.8831);transform-origin:left center;">Комплектація</div>
<div class="r" style="left:880px;top:627px;width:21px;height:30px;overflow:hidden">
<div class="t" style="top:4.86px;font-size:15.4px;color:#111;left:7.90px;transform:scaleX(0.8831);transform-origin:left center;">Ордер</div>
</div>
<div class="t" style="top:659.96px;font-size:15.4px;color:#fff;left:19.30px;transform:scaleX(0.8636);transform-origin:left center;">Кеди Nike Court Vision Lo CD5463-103...</div>
<div class="t" style="top:659.96px;font-size:15.4px;color:#111;left:274.25px;transform:scaleX(0.8636);transform-origin:left center;">CD5463-103</div>
<div class="t" style="top:659.96px;font-size:15.4px;color:#111;left:406.60px;transform:scaleX(0.8636);transform-origin:left center;">2940080000201</div>
<div class="t" style="top:659.96px;font-size:15.4px;color:#111;left:551.60px;transform:scaleX(0.8636);transform-origin:left center;">leurkfhblo</div>
<svg class="r" style="left:20.00px;top:718.50px" width="9" height="11" viewBox="0 0 9 11"><path d="M7 1L2 5.5L7 10" stroke="#444" stroke-width="1.8" fill="none"/></svg>
<div class="r" style="left:35.00px;top:714.00px;width:706.00px;height:19.00px;background:#bfbfbf;border-radius:4px;"></div>
<svg class="r" style="left:886.50px;top:718.50px" width="9" height="11" viewBox="0 0 9 11"><path d="M2 1L7 5.5L2 10" stroke="#444" stroke-width="1.8" fill="none"/></svg>
<div class="r" style="left:11.30px;top:738.50px;width:891.20px;height:5.00px;background:#c6c6c6;"></div>
<div class="r" style="left:16.00px;top:757.00px;width:180.00px;height:32.00px;background:#f0f0f0;border:1px solid #ababab;border-bottom:none;box-sizing:border-box;"></div>
<svg class="r" style="left:25.50px;top:766.00px" width="24" height="14" viewBox="0 0 24 14"><path d="M1 1.5h2.5M1 6.3h2.5M1 11.2h2.5" stroke="#f0962f" stroke-width="2.2"/><path d="M6.5 1.5H23M6.5 6.3H23M6.5 11.2H23" stroke="#f0962f" stroke-width="2.2"/></svg>
<div class="t" style="top:762.98px;font-size:14.5px;color:#111;left:56.40px;">Матеріал ремонту</div>
<div class="r" style="left:196.00px;top:757.00px;width:109.00px;height:32.00px;background:#d5d5d5;border:1px solid #ababab;box-sizing:border-box;"></div>
<svg class="r" style="left:205.50px;top:761.50px" width="22.5" height="22.5" viewBox="0 0 22.5 22.5"><rect width="22.5" height="22.5" fill="#5454d4"/><path d="M5 5.2H8.2M7 5.2V11.8Q7 13.2 8.4 13.2H15.8M15.8 5.2V16.2Q15.8 17.6 14.4 17.6H7" stroke="#fff" stroke-width="2" fill="none"/></svg>
<div class="t" style="top:762.89px;font-size:14.74px;color:#6e6e6e;left:236.20px;">Послуги</div>
<div class="r" style="left:304.00px;top:757.00px;width:102.00px;height:32.00px;background:#d5d5d5;border:1px solid #ababab;box-sizing:border-box;"></div>
<svg class="r" style="left:314.00px;top:761.50px" width="22.5" height="22.5" viewBox="0 0 22.5 22.5"><rect width="22.5" height="22.5" fill="#9d50d8"/><path d="M7.3 19V5.2H14.2Q17 5.2 17 8V11.2Q17 13.6 14.2 13.6H7.3" stroke="#fff" stroke-width="2" fill="none"/></svg>
<div class="t" style="top:762.82px;font-size:14.94px;color:#6e6e6e;left:344.40px;">Роботи</div>
<div class="r" style="left:405.50px;top:787.60px;width:492.50px;height:1.10px;background:#a9a9a9;"></div>
<div class="t" style="top:789.65px;font-size:13.41px;color:#888;left:395.20px;">Матеріали ремонту</div>
<div class="r" style="left:16.00px;top:811.00px;width:132.00px;height:32.00px;background:#fff;border:1px solid #c4c4c4;box-sizing:border-box;"></div>
<svg class="r" style="left:96.00px;top:820.70px" width="13.0" height="13.0" viewBox="0 0 13.0 13.0"><path d="M1 1L12.0 12.0M12.0 1L1 12.0" stroke="#222" stroke-width="1.4" fill="none"/></svg>
<svg class="r" style="left:122.00px;top:820.20px" width="23" height="16" viewBox="0 0 23 16"><circle cx="6.5" cy="6.5" r="4.8" stroke="#1a1a1a" stroke-width="1.9" fill="none"/><path d="M10 10L13.5 13.5" stroke="#1a1a1a" stroke-width="2"/><path d="M16 5.5h6l-3 3.5z" fill="#1a1a1a"/></svg>
<div class="r" style="left:161.00px;top:818.00px;width:1.20px;height:18.50px;background:#a8a8a8;"></div>
<svg class="r" style="left:183.30px;top:815.50px" width="19" height="23" viewBox="0 0 19 23"><path d="M1 1H11L17.5 7.5V21.5H1Z" stroke="#222" stroke-width="1.4" fill="none" stroke-linejoin="miter"/><path d="M11 1V7.5H17.5" stroke="#222" stroke-width="1.2" fill="none"/><path d="M9.2 10.5V18.5M5.2 14.5H13.2" stroke="#222" stroke-width="1.4"/></svg>
<svg class="r" style="left:219.00px;top:815.50px" width="23" height="23" viewBox="0 0 23 23"><path d="M3 18.5V14.5L15.5 2L19.8 6.3L7.3 18.8Z" stroke="#2a2a2a" stroke-width="1.4" fill="none" stroke-linejoin="round"/><path d="M13.2 4.3L17.5 8.6" stroke="#2a2a2a" stroke-width="1.3"/><path d="M0.5 21.8H22" stroke="#2a2a2a" stroke-width="1.3"/></svg>
<svg class="r" style="left:257.50px;top:815.30px" width="21" height="23" viewBox="0 0 21 23"><path d="M1 4H20M7.5 1.2H13.5" stroke="#e94b3c" stroke-width="1.5"/><path d="M3.5 4.5V21.5H17.5V4.5" stroke="#e94b3c" stroke-width="1.5" fill="none"/><path d="M8.5 8.5V17M12.5 8.5V17" stroke="#e94b3c" stroke-width="1.5"/></svg>
<svg class="r" style="left:301.00px;top:816.50px" width="21" height="21" viewBox="0 0 21 21"><path d="M1.5 10.5A9 9 0 0 1 18.2 5.6" stroke="#3f8ef0" stroke-width="1.7" fill="none"/><path d="M19.5 10.5A9 9 0 0 1 2.8 15.4" stroke="#3f8ef0" stroke-width="1.7" fill="none"/><path d="M18.8 1V6.3H13.6" stroke="#3f8ef0" stroke-width="1.7" fill="none"/><path d="M2.2 20V14.7H7.4" stroke="#3f8ef0" stroke-width="1.7" fill="none"/></svg>
<svg class="r" style="left:338.50px;top:816.50px" width="21" height="21" viewBox="0 0 21 21"><g transform="translate(6.6 6.6) rotate(-45)"><path d="M-1.9 -5.3V-1.3H1.9V-5.3A5.6 5.6 0 0 1 2.3 5.1V14.2A2.3 2.3 0 0 1 -2.3 14.2V5.1A5.6 5.6 0 0 1 -1.9 -5.3Z" stroke="#2a2a2a" stroke-width="1.35" fill="none" stroke-linejoin="round"/></g></svg>
<div class="r" style="left:371.60px;top:818.00px;width:1.20px;height:18.50px;background:#a8a8a8;"></div>
<svg class="r" style="left:388.00px;top:814.00px" width="26" height="26" viewBox="0 0 26 26"><path d="M1.1 10L11.9 1.5L22.5 10L11.9 17.6Z" stroke="#666" stroke-width="1.5" fill="none" stroke-linejoin="round"/><path d="M1.1 15.8L12 24.2" stroke="#666" stroke-width="1.5"/><path d="M14.9 19.5L19.6 15.5L24.2 19.5Z" fill="#666"/><path d="M19.6 19V24.5" stroke="#666" stroke-width="2.4"/></svg>
<div class="r" style="left:421.00px;top:813.00px;width:193.00px;height:28.00px;background:#fff;border:1px solid #c4c4c4;box-sizing:border-box;"></div>
<div class="t" style="top:817.17px;font-size:13.95px;color:#111;left:426.50px;">[В порядку введення]</div>
<svg class="r" style="left:594.30px;top:823.50px" width="12.100000000000023" height="7.5" viewBox="0 0 12.100000000000023 7.5"><path d="M1.8 1.6L6.050000000000011 5.9L10.300000000000022 1.6" stroke="#222" stroke-width="2.1" fill="none"/></svg>
<div class="r" style="left:16.00px;top:846.00px;width:882.00px;height:120.00px;background:#fff;border:1px solid #bdbdbd;box-sizing:border-box;"></div>
<div class="r" style="left:17.50px;top:847.30px;width:848.50px;height:29.50px;background:#f0f0f0;"></div>
<div class="r" style="left:17.50px;top:876.30px;width:849.00px;height:1.20px;background:#cfcfcf;"></div>
<div class="r" style="left:17.50px;top:904.80px;width:849.00px;height:1.20px;background:#cfcfcf;"></div>
<div class="r" style="left:250.70px;top:847.30px;width:1.20px;height:58.20px;background:#cfcfcf;"></div>
<div class="r" style="left:328.90px;top:847.30px;width:1.20px;height:58.20px;background:#cfcfcf;"></div>
<div class="r" style="left:393.70px;top:847.30px;width:1.20px;height:58.20px;background:#cfcfcf;"></div>
<div class="r" style="left:480.75px;top:847.30px;width:1.20px;height:58.20px;background:#cfcfcf;"></div>
<div class="r" style="left:613.00px;top:847.30px;width:1.20px;height:58.20px;background:#cfcfcf;"></div>
<div class="r" style="left:741.60px;top:847.30px;width:1.20px;height:58.20px;background:#cfcfcf;"></div>
<div class="r" style="left:865.50px;top:847.30px;width:1.20px;height:58.20px;background:#cfcfcf;"></div>
<div class="r" style="left:19.00px;top:877.50px;width:231.70px;height:27.30px;background:#5f9fd3;"></div>
<div class="t" style="top:851.96px;font-size:15.4px;color:#111;font-weight:bold;left:22.30px;transform:scaleX(0.9805);transform-origin:left center;">Назва товару</div>
<div class="t" style="top:851.96px;font-size:15.4px;color:#111;left:254.00px;transform:scaleX(0.8831);transform-origin:left center;">Штрих-код</div>
<div class="t" style="top:851.96px;font-size:15.4px;color:#111;left:332.80px;transform:scaleX(0.8831);transform-origin:left center;">Артикул</div>
<div class="t" style="top:851.96px;font-size:15.4px;color:#111;left:78.50px;width:400px;text-align:right;transform:scaleX(0.8831);transform-origin:right center;">Кількість</div>
<div class="t" style="top:851.96px;font-size:15.4px;color:#111;left:211.20px;width:400px;text-align:right;transform:scaleX(0.8831);transform-origin:right center;">Ціна</div>
<div class="t" style="top:851.96px;font-size:15.4px;color:#111;left:339.40px;width:400px;text-align:right;transform:scaleX(0.8831);transform-origin:right center;">Сума</div>
<div class="t" style="top:851.96px;font-size:15.4px;color:#111;left:464.30px;width:400px;text-align:right;transform:scaleX(0.8831);transform-origin:right center;">Зарезервовано</div>
<div class="t" style="top:880.16px;font-size:15.4px;color:#fff;left:24.40px;transform:scaleX(0.8636);transform-origin:left center;">Bastion Товар 1</div>
<div class="t" style="top:880.16px;font-size:15.4px;color:#111;left:257.20px;transform:scaleX(0.8636);transform-origin:left center;">0928288...</div>
<div class="t" style="top:880.16px;font-size:15.4px;color:#111;left:336.00px;transform:scaleX(0.8636);transform-origin:left center;">Товар 1</div>
<div class="t" style="top:880.16px;font-size:15.4px;color:#111;left:76.90px;width:400px;text-align:right;transform:scaleX(0.8636);transform-origin:right center;">1,00</div>
<div class="t" style="top:880.16px;font-size:15.4px;color:#111;left:208.50px;width:400px;text-align:right;transform:scaleX(0.8636);transform-origin:right center;">345,00</div>
<div class="t" style="top:880.16px;font-size:15.4px;color:#111;left:337.00px;width:400px;text-align:right;transform:scaleX(0.8636);transform-origin:right center;">345,00</div>
<div class="r" style="left:19.70px;top:969.40px;width:116.00px;height:28.60px;background:#e2e3e5;"></div>
<div class="t" style="top:974.30px;font-size:15.0px;color:#6e6e6e;left:29.40px;transform:scaleX(0.8980);transform-origin:left center;">Не резервовано</div>
<div class="r" style="left:903.00px;top:568.00px;width:3.30px;height:439.50px;background:#c6c6c6;"></div>
<div class="r" style="left:911.00px;top:581.00px;width:100.00px;height:32.00px;background:#f0f0f0;border:1px solid #ababab;border-bottom:none;box-sizing:border-box;"></div>
<div class="t" style="top:587.45px;font-size:14.3px;color:#111;left:920.80px;">Стан товару</div>
<div class="r" style="left:1010.00px;top:581.00px;width:91.00px;height:32.00px;background:#d5d5d5;border:1px solid #ababab;box-sizing:border-box;"></div>
<div class="t" style="top:587.47px;font-size:14.24px;color:#6e6e6e;left:1021.40px;">Рух товару</div>
<div class="r" style="left:1100.00px;top:581.00px;width:79.00px;height:32.00px;background:#d5d5d5;border:1px solid #ababab;box-sizing:border-box;"></div>
<div class="t" style="top:587.28px;font-size:14.78px;color:#6e6e6e;left:1110.50px;">Контакти</div>
<div class="r" style="left:1178.50px;top:611.60px;width:406.10px;height:1.10px;background:#a9a9a9;"></div>
<div class="t" style="top:613.23px;font-size:13.77px;color:#888;left:1179.60px;">Стан товару ремонту</div>
<div class="r" style="left:911.00px;top:636.00px;width:132.00px;height:32.00px;background:#fff;border:1px solid #c4c4c4;box-sizing:border-box;"></div>
<svg class="r" style="left:990.90px;top:645.40px" width="13.0" height="13.0" viewBox="0 0 13.0 13.0"><path d="M1 1L12.0 12.0M12.0 1L1 12.0" stroke="#222" stroke-width="1.4" fill="none"/></svg>
<svg class="r" style="left:1016.90px;top:644.90px" width="23" height="16" viewBox="0 0 23 16"><circle cx="6.5" cy="6.5" r="4.8" stroke="#1a1a1a" stroke-width="1.9" fill="none"/><path d="M10 10L13.5 13.5" stroke="#1a1a1a" stroke-width="2"/><path d="M16 5.5h6l-3 3.5z" fill="#1a1a1a"/></svg>
<div class="r" style="left:1055.50px;top:643.00px;width:1.20px;height:18.50px;background:#a8a8a8;"></div>
<svg class="r" style="left:1078.60px;top:640.20px" width="19" height="23" viewBox="0 0 19 23"><path d="M1 1H11L17.5 7.5V21.5H1Z" stroke="#222" stroke-width="1.4" fill="none" stroke-linejoin="miter"/><path d="M11 1V7.5H17.5" stroke="#222" stroke-width="1.2" fill="none"/><path d="M9.2 10.5V18.5M5.2 14.5H13.2" stroke="#222" stroke-width="1.4"/></svg>
<svg class="r" style="left:1113.70px;top:640.20px" width="23" height="23" viewBox="0 0 23 23"><path d="M3 18.5V14.5L15.5 2L19.8 6.3L7.3 18.8Z" stroke="#2a2a2a" stroke-width="1.4" fill="none" stroke-linejoin="round"/><path d="M13.2 4.3L17.5 8.6" stroke="#2a2a2a" stroke-width="1.3"/><path d="M0.5 21.8H22" stroke="#2a2a2a" stroke-width="1.3"/></svg>
<svg class="r" style="left:1158.50px;top:641.00px" width="21" height="21" viewBox="0 0 21 21"><path d="M1.5 10.5A9 9 0 0 1 18.2 5.6" stroke="#3f8ef0" stroke-width="1.7" fill="none"/><path d="M19.5 10.5A9 9 0 0 1 2.8 15.4" stroke="#3f8ef0" stroke-width="1.7" fill="none"/><path d="M18.8 1V6.3H13.6" stroke="#3f8ef0" stroke-width="1.7" fill="none"/><path d="M2.2 20V14.7H7.4" stroke="#3f8ef0" stroke-width="1.7" fill="none"/></svg>
<svg class="r" style="left:1195.70px;top:641.00px" width="21" height="21" viewBox="0 0 21 21"><g transform="translate(6.6 6.6) rotate(-45)"><path d="M-1.9 -5.3V-1.3H1.9V-5.3A5.6 5.6 0 0 1 2.3 5.1V14.2A2.3 2.3 0 0 1 -2.3 14.2V5.1A5.6 5.6 0 0 1 -1.9 -5.3Z" stroke="#2a2a2a" stroke-width="1.35" fill="none" stroke-linejoin="round"/></g></svg>
<div class="r" style="left:1229.00px;top:643.00px;width:1.20px;height:18.50px;background:#a8a8a8;"></div>
<div class="r" style="left:1240.00px;top:638.00px;width:193.00px;height:27.00px;background:#fff;border:1px solid #c4c4c4;box-sizing:border-box;"></div>
<div class="t" style="top:641.37px;font-size:13.95px;color:#111;left:1245.50px;">[В порядку введення]</div>
<svg class="r" style="left:1413.80px;top:647.50px" width="11.5" height="7.5" viewBox="0 0 11.5 7.5"><path d="M1.8 1.6L5.75 5.9L9.7 1.6" stroke="#222" stroke-width="2.1" fill="none"/></svg>
<div class="r" style="left:911.00px;top:671.00px;width:674.00px;height:276.00px;background:#fff;border:1px solid #bdbdbd;box-sizing:border-box;"></div>
<div class="r" style="left:912.50px;top:672.00px;width:670.50px;height:29.00px;background:#f0f0f0;"></div>
<div class="r" style="left:912.50px;top:700.60px;width:670.50px;height:1.20px;background:#cfcfcf;"></div>
<div class="r" style="left:912.50px;top:728.80px;width:670.50px;height:1.20px;background:#cfcfcf;"></div>
<div class="r" style="left:1035.50px;top:672.00px;width:1.20px;height:57.50px;background:#cfcfcf;"></div>
<div class="r" style="left:1352.00px;top:672.00px;width:1.20px;height:57.50px;background:#cfcfcf;"></div>
<div class="r" style="left:1582.50px;top:672.00px;width:1.20px;height:57.50px;background:#cfcfcf;"></div>
<div class="r" style="left:913.60px;top:701.80px;width:122.00px;height:27.00px;background:#5f9fd3;"></div>
<div class="t" style="top:676.16px;font-size:15.4px;color:#111;left:917.00px;transform:scaleX(0.8831);transform-origin:left center;">Дата</div>
<div class="t" style="top:676.16px;font-size:15.4px;color:#111;font-weight:bold;left:1040.00px;transform:scaleX(0.9805);transform-origin:left center;">Стан</div>
<div class="t" style="top:676.16px;font-size:15.4px;color:#111;left:1356.00px;transform:scaleX(0.8831);transform-origin:left center;">Коментар</div>
<div class="t" style="top:704.66px;font-size:15.4px;color:#fff;left:919.25px;transform:scaleX(0.8636);transform-origin:left center;">30.01.2023 19:0...</div>
<div class="t" style="top:704.66px;font-size:15.4px;color:#111;left:1042.20px;transform:scaleX(0.8636);transform-origin:left center;">Принят в ремонт</div>
<svg class="r" style="left:919.50px;top:929.00px" width="9" height="11" viewBox="0 0 9 11"><path d="M7 1L2 5.5L7 10" stroke="#444" stroke-width="1.8" fill="none"/></svg>
<div class="r" style="left:935.00px;top:925.00px;width:350.00px;height:18.00px;background:#bfbfbf;border-radius:4px;"></div>
<svg class="r" style="left:1567.80px;top:929.00px" width="9" height="11" viewBox="0 0 9 11"><path d="M2 1L7 5.5L2 10" stroke="#444" stroke-width="1.8" fill="none"/></svg>
<div class="r" style="left:911.50px;top:949.80px;width:673.50px;height:3.20px;background:#c6c6c6;"></div>
<div class="r" style="left:911.00px;top:953.00px;width:674.00px;height:50.00px;background:#fff;border:1px solid #bdbdbd;box-sizing:border-box;"></div>
</body></html>
